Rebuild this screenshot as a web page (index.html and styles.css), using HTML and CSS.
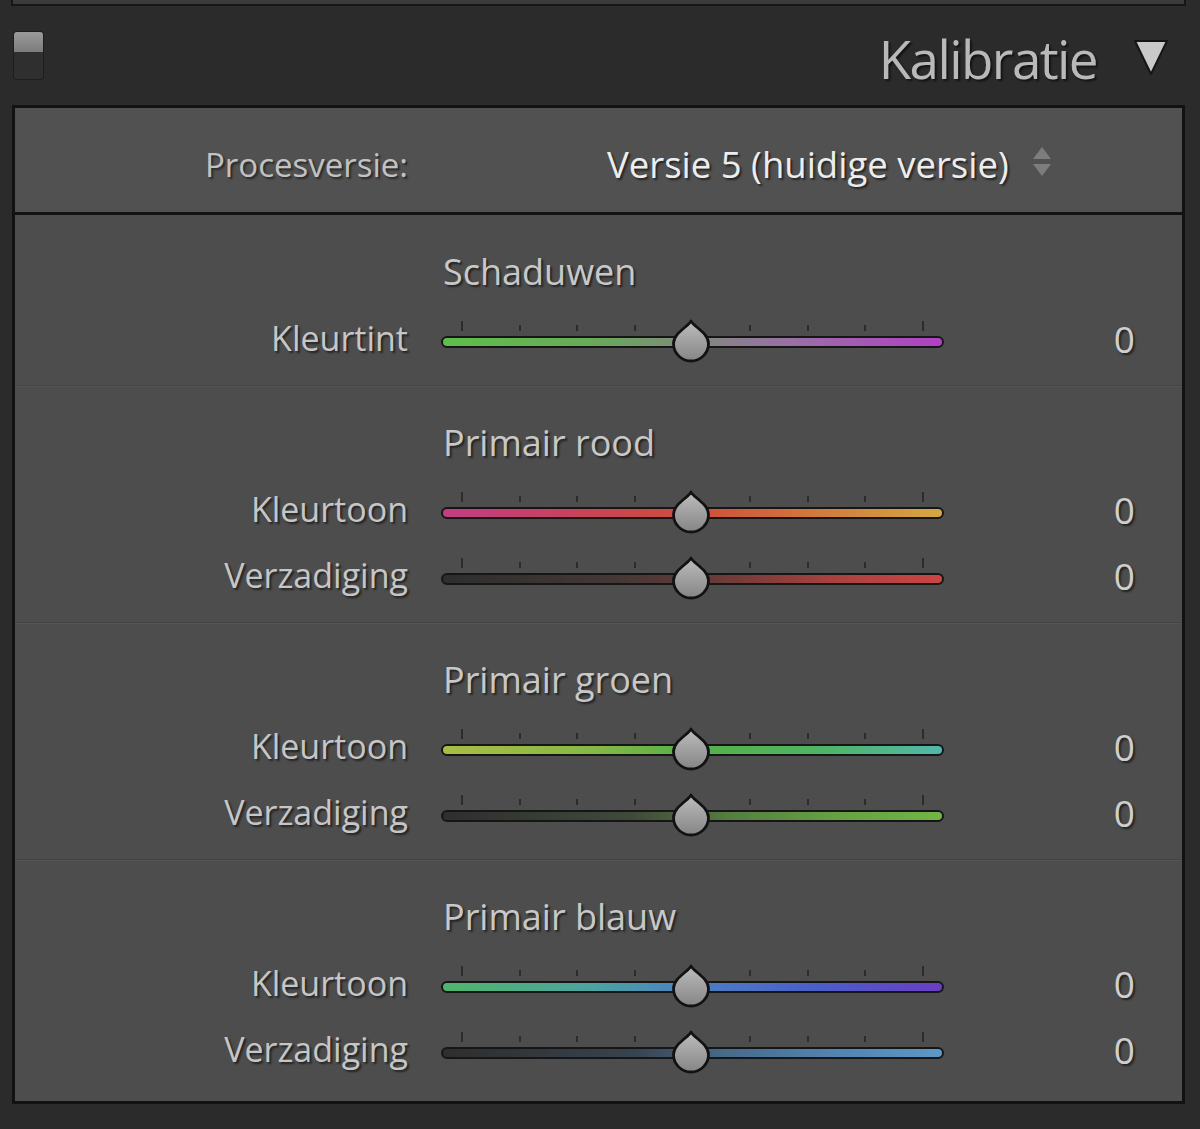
FILE: index.html
```html
<!DOCTYPE html>
<html lang="nl">
<head>
<meta charset="utf-8">
<title>Kalibratie</title>
<link rel="stylesheet" href="styles.css">
</head>
<body>
<div class="prev"></div>
<header class="header">
  <div class="switch"><span class="sw-top"></span><span class="sw-bot"></span></div>
  <h1 class="title">Kalibratie</h1>
  <svg class="tri" width="38" height="40" viewBox="0 0 38 40"><polygon points="3,4 35,4 19,37" fill="#c9c9c9" stroke="#151515" stroke-width="2" stroke-linejoin="round"/></svg>
</header>
<main class="panel">
  <div class="proc">
    <div class="proc-label">Procesversie:</div>
    <div class="proc-value">Versie 5 (huidige versie)
      <svg class="updown" width="22" height="34" viewBox="0 0 22 34"><polygon points="11,2 20,14 2,14" fill="#7d7d7d"/><polygon points="2,19 20,19 11,31" fill="#7d7d7d"/></svg>
    </div>
  </div>

  <section class="sect first">
    <div class="sect-title">Schaduwen</div>
    <div class="row">
      <div class="lbl">Kleurtint</div>
      <div class="slider"><div class="ticks"><i class="end"></i><i></i><i></i><i></i><i></i><i></i><i></i><i></i><i class="end"></i></div><div class="track t-tint"></div><svg class="thumb" width="42" height="44" viewBox="0 0 42 44"><path d="M21 2 C23 7 38.5 14 38.5 24.5 A17.5 17.5 0 0 1 3.5 24.5 C3.5 14 19 7 21 2 Z"/></svg></div>
      <div class="val">0</div>
    </div>
  </section>

  <section class="sect">
    <div class="sect-title">Primair rood</div>
    <div class="row">
      <div class="lbl">Kleurtoon</div>
      <div class="slider"><div class="ticks"><i class="end"></i><i></i><i></i><i></i><i></i><i></i><i></i><i></i><i class="end"></i></div><div class="track t-rhue"></div><svg class="thumb" width="42" height="44" viewBox="0 0 42 44"><path d="M21 2 C23 7 38.5 14 38.5 24.5 A17.5 17.5 0 0 1 3.5 24.5 C3.5 14 19 7 21 2 Z"/></svg></div>
      <div class="val">0</div>
    </div>
    <div class="row">
      <div class="lbl">Verzadiging</div>
      <div class="slider"><div class="ticks"><i class="end"></i><i></i><i></i><i></i><i></i><i></i><i></i><i></i><i class="end"></i></div><div class="track t-rsat"></div><svg class="thumb" width="42" height="44" viewBox="0 0 42 44"><path d="M21 2 C23 7 38.5 14 38.5 24.5 A17.5 17.5 0 0 1 3.5 24.5 C3.5 14 19 7 21 2 Z"/></svg></div>
      <div class="val">0</div>
    </div>
  </section>

  <section class="sect">
    <div class="sect-title">Primair groen</div>
    <div class="row">
      <div class="lbl">Kleurtoon</div>
      <div class="slider"><div class="ticks"><i class="end"></i><i></i><i></i><i></i><i></i><i></i><i></i><i></i><i class="end"></i></div><div class="track t-ghue"></div><svg class="thumb" width="42" height="44" viewBox="0 0 42 44"><path d="M21 2 C23 7 38.5 14 38.5 24.5 A17.5 17.5 0 0 1 3.5 24.5 C3.5 14 19 7 21 2 Z"/></svg></div>
      <div class="val">0</div>
    </div>
    <div class="row">
      <div class="lbl">Verzadiging</div>
      <div class="slider"><div class="ticks"><i class="end"></i><i></i><i></i><i></i><i></i><i></i><i></i><i></i><i class="end"></i></div><div class="track t-gsat"></div><svg class="thumb" width="42" height="44" viewBox="0 0 42 44"><path d="M21 2 C23 7 38.5 14 38.5 24.5 A17.5 17.5 0 0 1 3.5 24.5 C3.5 14 19 7 21 2 Z"/></svg></div>
      <div class="val">0</div>
    </div>
  </section>

  <section class="sect last">
    <div class="sect-title">Primair blauw</div>
    <div class="row">
      <div class="lbl">Kleurtoon</div>
      <div class="slider"><div class="ticks"><i class="end"></i><i></i><i></i><i></i><i></i><i></i><i></i><i></i><i class="end"></i></div><div class="track t-bhue"></div><svg class="thumb" width="42" height="44" viewBox="0 0 42 44"><path d="M21 2 C23 7 38.5 14 38.5 24.5 A17.5 17.5 0 0 1 3.5 24.5 C3.5 14 19 7 21 2 Z"/></svg></div>
      <div class="val">0</div>
    </div>
    <div class="row">
      <div class="lbl">Verzadiging</div>
      <div class="slider"><div class="ticks"><i class="end"></i><i></i><i></i><i></i><i></i><i></i><i></i><i></i><i class="end"></i></div><div class="track t-bsat"></div><svg class="thumb" width="42" height="44" viewBox="0 0 42 44"><path d="M21 2 C23 7 38.5 14 38.5 24.5 A17.5 17.5 0 0 1 3.5 24.5 C3.5 14 19 7 21 2 Z"/></svg></div>
      <div class="val">0</div>
    </div>
  </section>
</main>
<svg width="0" height="0" class="defs"><defs><linearGradient id="tg" x1="0" y1="0" x2="0" y2="1"><stop offset="0" stop-color="#bdbdbd"/><stop offset="1" stop-color="#858585"/></linearGradient></defs></svg>
</body>
</html>
```

FILE: styles.css
```css
* { box-sizing: border-box; }
html, body { margin: 0; padding: 0; }
body {
  background: #2b2b2b;
  width: 1200px;
  height: 1129px;
  overflow: hidden;
  font-family: "Open Sans", "Noto Sans", sans-serif;
  color: #c4c4c4;
}
.prev {
  margin-left: 11px;
  width: 1175px;
  height: 6px;
  background: #3b3b3b;
  border: 2px solid #161616;
  border-top: 0;
}
.header {
  height: 99px;
  display: flex;
  align-items: center;
  padding: 0 30px 0 14px;
}
.switch {
  width: 29px;
  height: 47px;
  display: flex;
  flex-direction: column;
  border-radius: 3px;
  overflow: hidden;
  box-shadow: 0 0 0 1px #1d1d1d;
}
.sw-top { height: 20px; background: linear-gradient(#9a9a9a, #7c7c7c); }
.sw-bot { flex: 1; background: #2f2f2f; }
.title {
  margin: 6px 35px 0 auto;
  font-size: 53px;
  letter-spacing: -1.6px;
  font-weight: 400;
  color: #b9b9b9;
  line-height: 1;
  text-shadow: 2px 2px 2px rgba(0,0,0,0.55);
}
.tri { display: block; margin-top: 2px; }
.panel {
  margin-left: 12px;
  width: 1173px;
  border: 3px solid #121212;
  background: #4d4d4d;
}
.proc {
  height: 107px;
  border-bottom: 3px solid #121212;
  background: #515151;
  display: grid;
  grid-template-columns: 393px 1fr;
  align-items: center;
  padding-top: 8px;
}
.proc-label {
  text-align: right;
  font-size: 33px;
  color: #c2c2c2;
  text-shadow: 2px 2px 2px rgba(0,0,0,0.5);
  line-height: 1;
}
.proc-value {
  padding-left: 199px;
  font-size: 36.5px;
  color: #ededed;
  text-shadow: 2px 2px 2px rgba(0,0,0,0.55);
  line-height: 1;
  display: flex;
  align-items: center;
}
.updown { margin-left: 22px; margin-top: -4px; }
.sect {
  padding-top: 32px;
  padding-bottom: 11px;
  border-top: 1px solid #434343;
  box-shadow: inset 0 1px 0 #545454;
}
.sect.first { border-top: 0; box-shadow: none; }
.sect.last { padding-bottom: 16px; }
.sect-title {
  height: 50px;
  line-height: 50px;
  margin-bottom: 11px;
  padding-left: 428px;
  font-size: 36px;
  color: #c8c8c8;
  text-shadow: 2px 2px 2px rgba(0,0,0,0.55);
}
.row {
  display: grid;
  grid-template-columns: 393px 503px 1fr;
  column-gap: 33px;
  height: 66px;
  align-items: center;
}
.lbl {
  text-align: right;
  font-size: 34px;
  line-height: 1;
  padding-bottom: 6px;
  color: #c6c6c6;
  text-shadow: 2px 2px 2px rgba(0,0,0,0.55);
}
.val {
  text-align: right;
  padding-right: 47px;
  padding-bottom: 6px;
  font-size: 37px;
  line-height: 1;
  color: #cfcfcf;
  text-shadow: 2px 2px 2px rgba(0,0,0,0.55);
}
.slider {
  position: relative;
  height: 40px;
  display: flex;
  flex-direction: column;
  justify-content: flex-end;
  padding-bottom: 13px;
}
.ticks {
  display: flex;
  justify-content: space-between;
  align-items: flex-end;
  padding: 0 20px;
  height: 10px;
  margin-bottom: 5px;
}
.ticks i {
  display: block;
  width: 2px;
  height: 6px;
  background: #2c2c2c;
}
.ticks i.end { height: 10px; }
.track {
  height: 12px;
  border: 2px solid #161616;
  border-radius: 6px;
}
.thumb {
  position: absolute;
  left: 229px;
  top: -2px;
  display: block;
}
.thumb path {
  fill: url(#tg);
  stroke: #121212;
  stroke-width: 2.8;
  stroke-linejoin: round;
}
.defs { position: absolute; }
.t-tint { background: linear-gradient(90deg, #5fbe4b 0%, #68aa58 30%, #7f8a7e 50%, #9a6fa6 70%, #b13fc4 100%); }
.t-rhue { background: linear-gradient(90deg, #c23d86 0%, #cb4258 28%, #d04c3c 50%, #d27a3c 75%, #d4a844 100%); }
.t-rsat { background: linear-gradient(90deg, #2e2e2e 0%, #443836 35%, #623a37 52%, #a8423f 78%, #cc4444 100%); }
.t-ghue { background: linear-gradient(90deg, #a9bd45 0%, #86b845 30%, #55b048 50%, #4fb462 75%, #52b8aa 100%); }
.t-gsat { background: linear-gradient(90deg, #2e2e2e 0%, #3f4a3a 38%, #557f40 58%, #66a043 78%, #72b445 100%); }
.t-bhue { background: linear-gradient(90deg, #4fb56c 0%, #4aa4a0 30%, #4a80c4 50%, #4a5ec8 75%, #6a3ec4 100%); }
.t-bsat { background: linear-gradient(90deg, #2e2e2e 0%, #37434d 38%, #466a8a 56%, #5284b0 78%, #5c98c8 100%); }
```
